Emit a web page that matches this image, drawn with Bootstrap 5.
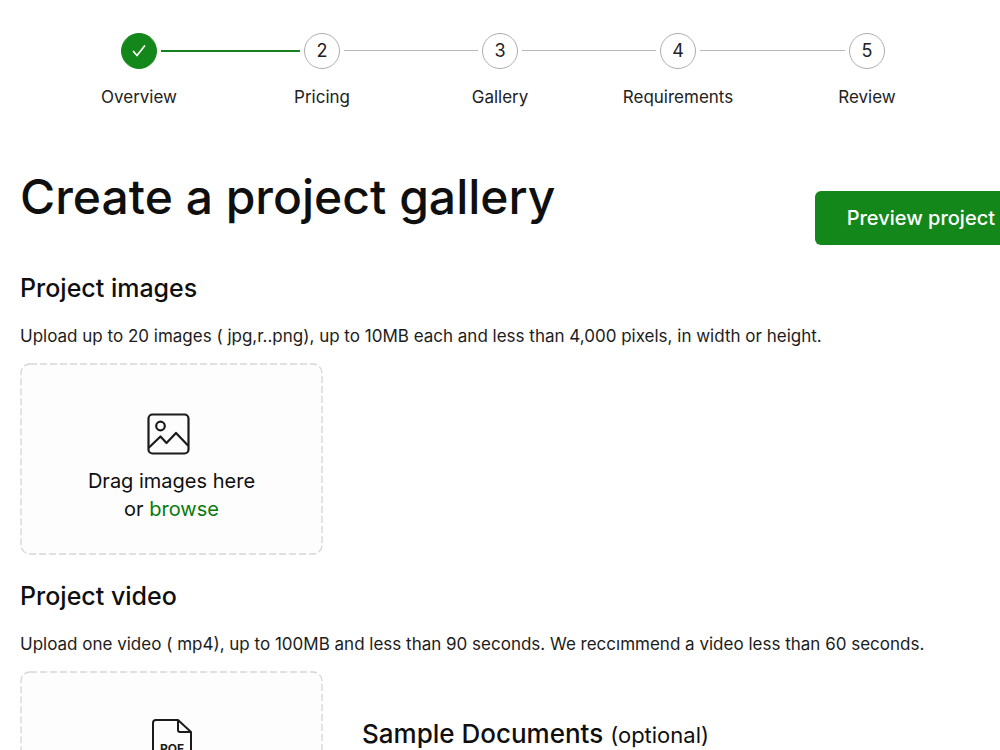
<!DOCTYPE html>
<html lang="en">
<head>
<meta charset="utf-8">
<meta name="viewport" content="width=device-width, initial-scale=1">
<title>Create a project gallery</title>
<link href="https://cdn.jsdelivr.net/npm/bootstrap@5.3.0/dist/css/bootstrap.min.css" rel="stylesheet">
<style>
  :root { --brand: #14871a; --brand-link: #087a0b; --ink: #0f0f10; }
  body { font-family: Inter, "Liberation Sans", sans-serif; color: var(--ink); background: #fff; }
  .page { padding: 33px 20px 48px; overflow: hidden; }

  /* Progress steps */
  .stepper { display: grid; grid-template-columns: 36px 147fr 36px 142fr 36px 142fr 36px 153fr 36px; margin: 0 95px 0 101px; }
  .step { display: flex; flex-direction: column; align-items: center; gap: 16px; font-size: 17px; line-height: 24px; color: #222; white-space: nowrap; width: 36px; }
  .step-dot { width: 36px; height: 36px; border: 1px solid #adadad; border-radius: 50%; flex: none; font-size: 18px; }
  .step-done .step-dot { background: var(--brand); border-color: var(--brand); }
  .step-line { height: 1px; background: #b8b8b8; margin: 17px 4px 0; }
  .step-line-done { height: 2px; background: #17821d; }

  .title-row { margin-top: 59px; margin-right: -47px; }
  h1 { font-size: 48px; font-weight: 500; line-height: 58px; }
  h2 { font-size: 25px; font-weight: 500; line-height: 30px; }
  .btn-preview { --bs-btn-bg: var(--brand); --bs-btn-color: #fff; --bs-btn-hover-bg: #0f7015; --bs-btn-hover-color: #fff; --bs-btn-border-radius: 6px; --bs-btn-border-width: 0; --bs-btn-font-size: 20px; --bs-btn-font-weight: 500; --bs-btn-padding-x: 32px; --bs-btn-padding-y: 12px; --bs-btn-line-height: 30px; margin-top: 23px; }
  .section-images { margin-top: 28px; }
  .section-video { margin-top: 26px; }
  .hint { font-size: 17px; line-height: 24px; margin: 21px 0 15px; color: #1c1c1c; }
  .dropzone { width: 303px; height: 192px; padding-top: 48px; font-size: 20px; line-height: 28px; background: #fdfdfd; position: relative; flex: none; }
  .dropzone p { margin: 12px 0 0; }
  .dropzone a { color: var(--brand-link); text-decoration: none; }
  .dash-frame { position: absolute; inset: 0; width: 100%; height: 100%; pointer-events: none; }
  .sample-heading { font-size: 26px; margin: 48px 0 0 15px; }
  .optional { font-size: 22px; font-weight: 400; }
</style>
</head>
<body>
<main class="page">
  <ol class="stepper list-unstyled">
    <li class="step step-done">
      <span class="step-dot d-flex align-items-center justify-content-center">
        <svg width="16" height="16" viewBox="0 0 16 16" fill="none" stroke="#fff" stroke-width="1.7" stroke-linecap="round" stroke-linejoin="round" aria-hidden="true"><path d="M2.500 8.500 6 12.500 13.500 3"/></svg>
      </span>
      <span>Overview</span>
    </li>
    <li class="step-line step-line-done" aria-hidden="true"></li>
    <li class="step"><span class="step-dot d-flex align-items-center justify-content-center">2</span><span>Pricing</span></li>
    <li class="step-line" aria-hidden="true"></li>
    <li class="step"><span class="step-dot d-flex align-items-center justify-content-center">3</span><span>Gallery</span></li>
    <li class="step-line" aria-hidden="true"></li>
    <li class="step"><span class="step-dot d-flex align-items-center justify-content-center">4</span><span>Requirements</span></li>
    <li class="step-line" aria-hidden="true"></li>
    <li class="step"><span class="step-dot d-flex align-items-center justify-content-center">5</span><span>Review</span></li>
  </ol>

  <div class="title-row d-flex justify-content-between align-items-start">
    <h1 class="mb-0">Create a project gallery</h1>
    <button type="button" class="btn btn-preview text-nowrap">Preview project</button>
  </div>

  <section class="section-images">
    <h2 class="mb-0">Project images</h2>
    <p class="hint">Upload up to 20 images ( jpg,r..png), up to 10MB each and less than 4,000 pixels, in width or height.</p>
    <div class="dropzone text-center rounded-3">
      <svg class="dash-frame" aria-hidden="true"><rect x="1" y="1" width="301" height="190" rx="9" fill="none" stroke="#d6d6d6" stroke-width="1.300" stroke-dasharray="7 3"/></svg>
      <svg class="d-block mx-auto" width="50" height="44" viewBox="0 0 50 44" fill="none" stroke="#1b1b1b" stroke-width="2.200" stroke-linejoin="round" stroke-linecap="round" aria-hidden="true">
        <rect x="1.500" y="3.500" width="40" height="39" rx="4"/>
        <circle cx="13.500" cy="15" r="4.300"/>
        <path d="M2.500 36 13.500 25.500 19.500 32 29 22 40.500 34"/>
      </svg>
      <p>Drag images here<br>or <a href="#">browse</a></p>
    </div>
  </section>

  <section class="section-video">
    <h2 class="mb-0">Project video</h2>
    <p class="hint">Upload one video ( mp4), up to 100MB and less than 90 seconds. We reccımmend a video less than 60 seconds.</p>
    <div class="d-flex gap-4">
      <div class="dropzone text-center rounded-3">
        <svg class="dash-frame" aria-hidden="true"><rect x="1" y="1" width="301" height="190" rx="9" fill="none" stroke="#d6d6d6" stroke-width="1.300" stroke-dasharray="7 3"/></svg>
        <svg class="d-block mx-auto" width="40" height="50" viewBox="0 0 40 50" fill="none" stroke="#1b1b1b" stroke-width="2" stroke-linejoin="round" aria-hidden="true">
          <path d="M4 1H26L39 13V45a3 3 0 0 1-3 3H4a3 3 0 0 1-3-3V4a3 3 0 0 1 3-3Z"/>
          <path d="M26 1V11a2 2 0 0 0 2 2H39"/>
          <text x="20" y="34" text-anchor="middle" font-size="12" font-weight="700" fill="#1b1b1b" stroke="none">POF</text>
        </svg>
      </div>
      <h2 class="sample-heading">Sample Documents <span class="optional">(optional)</span></h2>
    </div>
  </section>
</main>
<script src="https://cdn.jsdelivr.net/npm/bootstrap@5.3.0/dist/js/bootstrap.bundle.min.js"></script>
</body>
</html>
